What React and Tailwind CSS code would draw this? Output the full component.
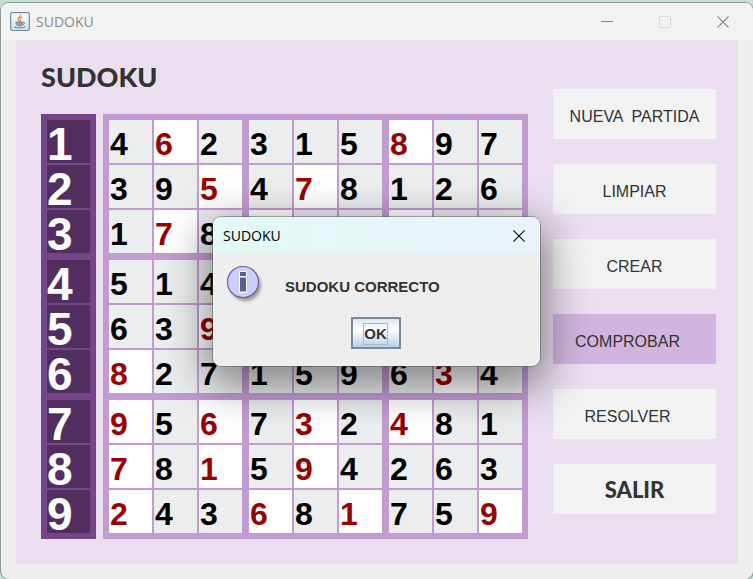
import React from "react";

const ROWS = [
  "462315897",
  "395478126",
  "178926345",
  "514263978",
  "639847512",
  "827159634",
  "956732481",
  "781594263",
  "243681759",
];

// "x" marks the squares the player filled in.
const FILLED = [
  ".x....x..",
  "..x.x....",
  ".x.x..x..",
  ".........",
  "..x......",
  "x......x.",
  "x.x.x.x..",
  "x.x.x....",
  "x..x.x..x",
];

const THREE = [0, 1, 2];

const ACTIONS = [
  { label: "NUEVA  PARTIDA", style: "bg-[#f2f2f2] pt-[6px] text-base" },
  { label: "LIMPIAR", style: "bg-[#f2f2f2] pt-[6px] text-base" },
  { label: "CREAR", style: "bg-[#f2f2f2] pt-[6px] text-base" },
  { label: "COMPROBAR", style: "bg-[#d2b4de] pt-[6px] pr-[14px] text-base" },
  { label: "RESOLVER", style: "bg-[#f2f2f2] pt-[6px] pr-[14px] text-base" },
  { label: "SALIR", style: "bg-[#f2f2f2] font-['Lato',sans-serif] text-[22px] font-black" },
];

function JavaIcon() {
  return (
    <svg className="h-5 w-5" viewBox="0 0 20 20" fill="none" aria-hidden="true">
      <defs>
        <linearGradient id="javaBg" x1="0" y1="0" x2="0" y2="1">
          <stop offset="0" stopColor="#ffffff" />
          <stop offset="1" stopColor="#d5dde5" />
        </linearGradient>
      </defs>
      <rect x="0.7" y="0.7" width="18.6" height="17.8" rx="1.5" fill="url(#javaBg)" stroke="#6f8ba4" strokeWidth="1.2" />
      <path d="M10.6 3c.6 1.6-3.4 2.6-2.6 4.4.3.8 1 1.3 1.4 1.9M11.8 5.2c-1.6.8-2.2 1.5-1.4 2.6.4.6.1 1.1-.3 1.5" stroke="#e8934a" strokeWidth="1.3" strokeLinecap="round" />
      <path d="M5.8 10h7.2v1.6c0 1.5-1.4 2.4-3.4 2.4s-3.8-.9-3.8-2.4z" fill="#8ba3b8" stroke="#6884a0" strokeWidth="0.7" />
      <path d="M13 10.4c2.4-.5 2.4 2-.4 2.5M4.2 15c2.6 1.2 8.4 1.2 11-.1" stroke="#6884a0" strokeWidth="1" strokeLinecap="round" />
    </svg>
  );
}

function InfoIcon() {
  return (
    <svg className="h-10 w-10 shrink-0" viewBox="0 0 40 40" aria-hidden="true">
      <defs>
        <filter id="infoShadow" x="-30%" y="-30%" width="160%" height="160%">
          <feGaussianBlur stdDeviation="1.6" />
        </filter>
      </defs>
      <circle cx="18.5" cy="19.5" r="15.5" fill="#000" opacity="0.35" filter="url(#infoShadow)" />
      <circle cx="16" cy="16" r="15.5" fill="#ccccff" stroke="#666699" strokeWidth="1.2" />
      <path d="M12 5h8v22h-8z" fill="#fff" />
      <path d="M13 6h6v4h-6zM13 11.5h6v14h-6z" fill="#5c5c94" />
    </svg>
  );
}

function CloseIcon({ className }) {
  return (
    <svg className={className} viewBox="0 0 12 12" fill="none" stroke="currentColor" strokeWidth="1.1" aria-hidden="true">
      <path d="M0.4 0.4L11.6 11.6M11.6 0.4L0.4 11.6" />
    </svg>
  );
}

function Square({ row, col }) {
  const digit = ROWS[row][col];
  if (FILLED[row][col] === "x") {
    return (
      <input
        type="text"
        maxLength={1}
        defaultValue={digit}
        aria-label={`Fila ${row + 1}, columna ${col + 1}`}
        className="h-[43px] w-[43px] rounded-none bg-white pt-[6px] pl-px text-[32px] leading-[37px] font-bold text-[#990000] outline-none"
      />
    );
  }
  return (
    <div className="h-[43px] w-[43px] bg-[#ebedef] pt-[6px] pl-px text-[32px] leading-[37px] font-bold text-black">
      {digit}
    </div>
  );
}

function RowNumbers() {
  return (
    <div className="flex flex-col gap-[7px] bg-[#764587] p-[6px]">
      {THREE.map((block) => (
        <div key={block} className="flex flex-col gap-[2px]">
          {THREE.map((i) => (
            <div key={i} className="h-[43px] w-[43px] bg-[#512e5f] pt-[6px] text-[46px] leading-[37px] font-bold text-white">
              {block * 3 + i + 1}
            </div>
          ))}
        </div>
      ))}
    </div>
  );
}

function Board() {
  return (
    <div className="grid grid-cols-3 gap-[7px] bg-[#c39bd3] p-[6px]">
      {THREE.map((br) =>
        THREE.map((bc) => (
          <div key={`${br}${bc}`} className="grid grid-cols-3 gap-[2px]">
            {THREE.map((r) =>
              THREE.map((c) => <Square key={`${r}${c}`} row={br * 3 + r} col={bc * 3 + c} />)
            )}
          </div>
        ))
      )}
    </div>
  );
}

function Message() {
  return (
    <div
      role="dialog"
      aria-labelledby="dialog-title"
      className="absolute top-[217px] left-[213px] w-[327px] overflow-hidden rounded-lg bg-[#eeeeee] shadow-[0_0_0_1px_rgba(80,80,80,0.45),0_14px_44px_6px_rgba(0,0,0,0.45)]"
    >
      <div className="flex h-[37px] items-center justify-between bg-linear-to-r from-[#e2f9f5] to-[#eaf2fb] pr-[15px] pl-[10px]">
        <h2 id="dialog-title" className="font-['Open_Sans',sans-serif] text-sm text-black">SUDOKU</h2>
        <button type="button" aria-label="Cerrar" className="text-black">
          <CloseIcon className="h-3 w-3" />
        </button>
      </div>
      <div className="flex gap-[18px] pt-3 pl-[14px]">
        <InfoIcon />
        <p className="pt-[11px] text-[15px] leading-5 font-bold text-[#333333]">SUDOKU CORRECTO</p>
      </div>
      <div className="flex justify-center pt-[11px] pr-[2px] pb-[17px]">
        <button
          type="button"
          className="flex h-8 w-[50px] items-center justify-center border-2 border-[#7a8a99] bg-linear-to-b from-[#dde8f3] via-white via-40% to-[#b8cfe5] pt-[2px] text-[15px] font-bold text-[#333333]"
        >
          <span className="border border-[#a3b8cc] leading-5">OK</span>
        </button>
      </div>
    </div>
  );
}

export default function App() {
  return (
    <div className="relative min-h-screen bg-[#c6ddd4] pt-[3px] pl-px font-['Liberation_Sans',Arial,sans-serif]">
      <div className="overflow-hidden rounded-lg bg-[#eeeeee] pb-[15px] shadow-[0_0_0_1px_#8b9c96]">
        <header className="flex h-[37px] items-center justify-between bg-[#f2f2f2] pr-6 pl-[9px]">
          <div className="flex items-center gap-[6px]">
            <JavaIcon />
            <span className="font-['Open_Sans',sans-serif] text-sm text-[#8a8a8a]">SUDOKU</span>
          </div>
          <div className="flex items-center gap-[46px] text-[#828282]">
            <button type="button" aria-label="Minimizar">
              <svg className="h-3 w-3" viewBox="0 0 12 12" stroke="currentColor" aria-hidden="true">
                <path d="M0 5.5h12" />
              </svg>
            </button>
            <button type="button" aria-label="Maximizar" disabled className="text-[#d6d6d6]">
              <svg className="h-3 w-3" viewBox="0 0 12 12" fill="none" stroke="currentColor" aria-hidden="true">
                <rect x="0.5" y="0.5" width="11" height="11" rx="1" />
              </svg>
            </button>
            <button type="button" aria-label="Cerrar ventana">
              <CloseIcon className="h-3 w-3" />
            </button>
          </div>
        </header>
        <main className="mx-[15px] flex gap-[25px] bg-[#eadeef] pr-[22px] pb-[25px] pl-[25px]">
          <div className="shrink-0">
            <h1 className="flex h-[74px] items-center font-['Lato',sans-serif] text-[27px] font-black text-[#333333]">SUDOKU</h1>
            <div className="flex gap-[7px]">
              <RowNumbers />
              <Board />
            </div>
          </div>
          <nav className="flex flex-1 flex-col gap-[25px] pt-[49px]">
            {ACTIONS.map(({ label, style }) => (
              <button key={label} type="button" className={`h-[50px] text-center whitespace-pre text-[#333333] ${style}`}>
                {label}
              </button>
            ))}
          </nav>
        </main>
      </div>
      <Message />
    </div>
  );
}
